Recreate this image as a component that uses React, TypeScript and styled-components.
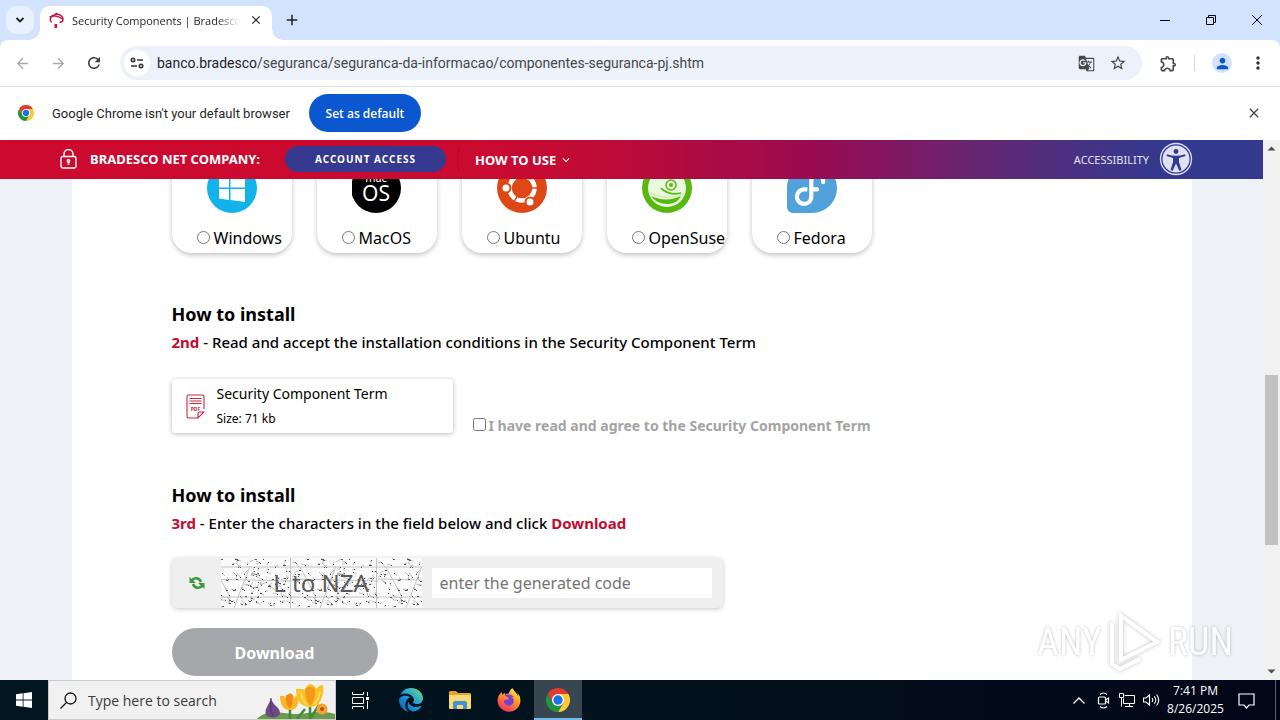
import React from "react";
import styled, { createGlobalStyle, css } from "styled-components";
import {
  MdArrowBack, MdArrowForward, MdRefresh, MdGTranslate, MdStarBorder, MdOutlineExtension,
  MdPerson, MdMoreVert, MdClose, MdAdd, MdExpandMore,
} from "react-icons/md";
import { FaEdge, FaFirefoxBrowser } from "react-icons/fa6";
import { SiFedora } from "react-icons/si";

const ui = `"Open Sans", "Noto Sans", sans-serif`;
const brand = `"Noto Sans", "Open Sans", sans-serif`;
const red = "#c4092f";

const GlobalStyle = createGlobalStyle`
  * { box-sizing: border-box; }
  body { margin: 0; font-family: ${ui}; color: #1f1f1f; overflow: hidden; }
  button, input { font: inherit; }
  button { border: 0; padding: 0; background: none; color: inherit; }
  svg { display: block; flex: none; }
  h2, p { margin: 0; }
  a { color: inherit; text-decoration: none; }
`;

const Desktop = styled.div`
  height: 100vh;
  display: flex;
  flex-direction: column;
`;

/* Browser frame */
const TabStrip = styled.header`
  flex: none;
  height: 40px;
  padding-left: 6px;
  display: flex;
  align-items: flex-end;
  background: #d3e3fd;
`;
const TabSearch = styled.button`
  width: 28px;
  height: 28px;
  margin-bottom: 6px;
  border-radius: 10px;
  background: #eaf1fe;
  display: grid;
  place-items: center;
`;
const flare = css`
  content: "";
  position: absolute;
  bottom: 0;
  width: 10px;
  height: 10px;
`;
const Tab = styled.div`
  position: relative;
  width: 232px;
  height: 34px;
  margin-left: 6px;
  padding: 0 8px 6px 8px;
  border-radius: 10px 10px 0 0;
  background: #fff;
  display: flex;
  align-items: center;
  gap: 7px;
  font-size: 11px;
  &::before { ${flare} left: -10px; background: radial-gradient(circle at 0 0, transparent 9px, #fff 10px); }
  &::after { ${flare} right: -10px; background: radial-gradient(circle at 100% 0, transparent 9px, #fff 10px); }
`;
const TabTitle = styled.span`
  flex: 1;
  overflow: hidden;
  white-space: nowrap;
  mask-image: linear-gradient(90deg, #000 145px, transparent 168px);
`;
const PlainButton = styled.button<{ $w: number; $c?: string }>`
  width: ${(p) => p.$w}px;
  height: 28px;
  color: ${(p) => p.$c || "#1f1f1f"};
  display: grid;
  place-items: center;
  flex: none;
`;
const NewTab = styled(PlainButton)`
  margin: 0 0 6px 6px;
`;
const WindowControls = styled.div`
  margin-left: auto;
  height: 40px;
  display: flex;
  align-items: center;
`;
const ToolbarBack = styled.div`
  flex: none;
  background: #d3e3fd;
`;
const Toolbar = styled.nav`
  height: 47px;
  padding: 0 4px;
  border-radius: 8px 8px 0 0;
  border-bottom: 1px solid #dfe3ea;
  background: #fff;
  display: flex;
  align-items: center;
`;
const AddressBar = styled.div`
  flex: 1;
  height: 34px;
  margin: 0 8px;
  padding: 0 8px 0 4px;
  border-radius: 17px;
  background: #edf1fa;
  display: flex;
  align-items: center;
`;
const SiteInfo = styled(PlainButton)`
  height: 26px;
  border-radius: 13px;
  background: #fff;
`;
const Url = styled.span`
  flex: 1;
  padding-left: 7px;
  font-family: Roboto, "Open Sans", sans-serif;
  font-size: 14px;
  color: #474747;
  white-space: nowrap;
  b { font-weight: 400; color: #1f1f1f; }
`;
const Divider = styled.span`
  width: 1px;
  height: 16px;
  margin: 0 9px 0 8px;
  background: #c7d6ef;
`;
const Avatar = styled.span`
  width: 20px;
  height: 20px;
  border-radius: 50%;
  background: #d3e3fd;
  color: #0b57d0;
  display: grid;
  place-items: center;
`;
const InfoBar = styled.div`
  flex: none;
  height: 53px;
  padding: 0 8px 1px 18px;
  background: #fff;
  display: flex;
  align-items: center;
  font-size: 12px;
`;
const InfoText = styled.span`
  margin: 0 19px 0 18px;
  font-family: Roboto, "Open Sans", sans-serif;
  font-size: 13px;
`;
const DefaultButton = styled.button`
  width: 112px;
  height: 38px;
  border-radius: 19px;
  background: #0b57d0;
  color: #fff;
  font-size: 12px;
  font-weight: 600;
`;
const DismissButton = styled(PlainButton)`
  margin-left: auto;
`;

/* Web page */
const Viewport = styled.div`
  flex: 1;
  min-height: 0;
  display: flex;
`;
const Page = styled.div`
  position: relative;
  flex: 1;
  overflow: hidden;
  background: #eef1f6;
  font-family: ${brand};
  color: #000;
`;
const SiteHeader = styled.header`
  position: relative;
  z-index: 1;
  height: 39px;
  padding: 0 70px 1px 60px;
  background: linear-gradient(90deg, #cc092f 0%, #cb0a30 38%, #be0b37 48%, #9b0b50 64%, #7f1862 71%, #5f2876 79%, #3f3588 88%, #33398e 92%);
  color: #fff;
  display: flex;
  align-items: center;
  font-size: 13px;
  font-weight: 700;
`;
const Product = styled.span`
  margin: 0 25px 0 13px;
`;
const AccessButton = styled.button`
  width: 161px;
  height: 26px;
  border-radius: 13px;
  background: #35398f;
  font-size: 10px;
  font-weight: 700;
  letter-spacing: 1px;
  margin-right: 12px;
`;
const HowToUse = styled.button`
  height: 24px;
  padding: 1px 0 0 16px;
  border-left: 1px solid #b5082c;
  display: flex;
  align-items: center;
  gap: 3px;
  font-weight: 700;
`;
const Accessibility = styled.a`
  margin-left: auto;
  display: flex;
  align-items: center;
  gap: 10px;
  font-size: 11px;
  font-weight: 400;
  color: #e3e3f3;
`;
const Content = styled.main`
  max-width: 1120px;
  height: 100%;
  margin: 0 auto;
  padding: 0 100px;
  background: #fff;
`;
const Systems = styled.div`
  display: flex;
  gap: 25px;
  margin-top: -26px;
`;
const SystemCard = styled.label`
  width: 120px;
  height: 100px;
  padding: 10px 0 5px 22px;
  border-radius: 20px;
  box-shadow: 0 2px 5px rgba(0, 0, 0, 0.24);
  display: flex;
  flex-direction: column;
  justify-content: space-between;
  font-size: 16px;
  line-height: 20px;
  & > svg { margin-left: 13px; }
`;
const Choice = styled.span`
  display: flex;
  align-items: center;
  input { width: 13px; height: 13px; margin: 0 4px 2px 3px; }
`;
const Step = styled.section<{ $top: number }>`
  margin-top: ${(p) => p.$top}px;
`;
const Title = styled.h2`
  font-size: 18px;
  line-height: 29px;
  font-weight: 700;
`;
const Instruction = styled.p`
  font-size: 15px;
  line-height: 26px;
  font-weight: 500;
  strong { color: ${red}; font-weight: 700; }
`;
const TermRow = styled.div`
  margin-top: 24px;
  display: flex;
  align-items: flex-end;
  gap: 20px;
`;
const TermCard = styled.a`
  width: 281px;
  height: 54px;
  padding: 0 14px;
  border-radius: 4px;
  box-shadow: 0 1px 5px rgba(0, 0, 0, 0.28);
  display: flex;
  align-items: center;
  gap: 12px;
  font-size: 14px;
  line-height: 25px;
  small { display: block; font-size: 12px; }
`;
const Agree = styled.label`
  display: flex;
  align-items: center;
  font-size: 14px;
  line-height: 14px;
  font-weight: 700;
  color: #a3a3a3;
  input { width: 13px; height: 13px; margin: 0 3px 2px 0; }
`;
const Captcha = styled.div`
  width: 551px;
  height: 50px;
  margin-top: 22px;
  padding-left: 17px;
  border-radius: 6px;
  background: #efefef;
  box-shadow: 0 1px 5px rgba(0, 0, 0, 0.22);
  display: flex;
  align-items: center;
`;
const CodeImage = styled.svg`
  margin: 0 10px 0 16px;
`;
const CodeInput = styled.input`
  width: 280px;
  height: 30px;
  padding: 0 8px;
  border: 0;
  background: #fff;
  font-size: 16px;
  &::placeholder { color: #757575; opacity: 1; }
`;
const Download = styled.button`
  width: 206px;
  height: 48px;
  margin-top: 20px;
  padding-top: 1px;
  border-radius: 24px;
  background: #a6a7aa;
  color: #fff;
  font-size: 16px;
  font-weight: 700;
`;
const ScrollBar = styled.div`
  width: 17px;
  background: #f1f1f1;
  display: flex;
  flex-direction: column;
  align-items: center;
`;
const ScrollArrow = styled.svg`
  width: 17px;
  height: 17px;
`;
const ScrollGap = styled.div<{ $grow: number }>`
  flex: ${(p) => p.$grow};
`;
const ScrollThumb = styled.div`
  flex: 170;
  width: 13px;
  background: #c1c1c1;
`;
const Watermark = styled.div`
  position: absolute;
  right: 30px;
  bottom: 8px;
  display: flex;
  align-items: center;
  gap: 5px;
  font: 400 38px/60px "Roboto Condensed", "Liberation Sans Narrow", Roboto, sans-serif;
  color: #fff;
  text-shadow: 0 0 3px rgba(0, 0, 0, 0.35);
  opacity: 0.8;
  pointer-events: none;
  svg { filter: drop-shadow(0 0 2px rgba(0, 0, 0, 0.3)); }
`;

/* Taskbar */
const TaskBar = styled.footer`
  flex: none;
  height: 40px;
  background: linear-gradient(90deg, #02161f, #03121d 50%, #020617);
  color: #fff;
  display: flex;
`;
const TaskButton = styled.button<{ $w?: number; $active?: boolean }>`
  width: ${(p) => p.$w || 49}px;
  display: grid;
  place-items: center;
  background: ${(p) => (p.$active ? "#38474f" : "none")};
  box-shadow: ${(p) => (p.$active ? "inset 0 -2px #76b9ed" : "none")};
`;
const Search = styled.label`
  width: 288px;
  padding-left: 11px;
  border: 1px solid #c9cbcc;
  background: #f1f1f1;
  color: #222;
  display: flex;
  align-items: center;
  gap: 11px;
  overflow: hidden;
`;
const SearchInput = styled.input`
  flex: 1;
  min-width: 0;
  border: 0;
  padding: 0;
  background: none;
  font-size: 14px;
  &::placeholder { color: #3a3a3a; opacity: 1; }
`;
const Tray = styled.div`
  margin-left: auto;
  display: flex;
  align-items: center;
`;
const Clock = styled.time`
  width: 65px;
  text-align: center;
  font-size: 12px;
  line-height: 18px;
  white-space: nowrap;
`;
const ShowDesktop = styled.button`
  width: 5px;
  height: 40px;
  margin-left: 11px;
  border-left: 1px solid #5b6270;
`;

const Gradients = () => (
  <svg width="0" height="0" aria-hidden="true">
    <linearGradient id="edge" x1="0" y1="1" x2="1" y2="0">
      <stop offset="0" stopColor="#0c59a4" /><stop offset=".5" stopColor="#1b9de2" /><stop offset="1" stopColor="#6fe36b" />
    </linearGradient>
    <linearGradient id="fox" x1=".8" y1="0" x2=".2" y2="1">
      <stop offset="0" stopColor="#fff44f" /><stop offset=".4" stopColor="#ff9a1f" /><stop offset="1" stopColor="#f0286b" />
    </linearGradient>
  </svg>
);

const ChromeLogo = ({ size }: { size: number }) => (
  <svg width={size} height={size} viewBox="0 0 48 48">
    <path d="M24 12h20.800A24 24 0 0 0 3.200 12l10.400 18Z" fill="#e33b2e" />
    <path d="M34.400 30 24 48A24 24 0 0 0 44.800 12H24Z" fill="#fcc934" />
    <path d="M13.600 30 3.200 12A24 24 0 0 0 24 48l10.400-18Z" fill="#229342" />
    <circle cx="24" cy="24" r="12" fill="#fff" />
    <circle cx="24" cy="24" r="9.400" fill="#1a73e8" />
  </svg>
);

const BradescoLogo = () => (
  <svg width="17" height="17" viewBox="0 0 17 17" fill="none" stroke="#cc1240">
    <path d="M3.500 10.500C1 8 2 4 7 2.600c4.500-1 8 1.400 8 4.900 0 1.800-1.500 2.700-3.500 3" strokeWidth="1.500" />
    <path d="M1.500 4.800C5 3.300 10.500 4 14.500 7M6 4.500c.3-1.700 1.500-3 3.500-3.500" strokeWidth="1.200" />
    <path d="M7.800 12v4" strokeWidth="2.600" />
  </svg>
);

const WindowsDisc = () => (
  <svg width="50" height="50" viewBox="0 0 50 50">
    <circle cx="25" cy="25" r="25" fill="#12b3eb" />
    <path d="M12 14.500 22 13v11.500H12ZM23.500 12.800 38 10.500v14H23.500ZM12 26h10v11l-10-1.500ZM23.500 26H38v13l-14.500-2Z" fill="#fff" />
  </svg>
);

const MacDisc = () => (
  <svg width="50" height="50" viewBox="0 0 50 50" fontFamily={brand} fill="#fff" textAnchor="middle">
    <circle cx="24" cy="25" r="25" fill="#000" />
    <text x="24" y="19" fontSize="11">mac</text>
    <text x="24" y="38" fontSize="21">OS</text>
  </svg>
);

const UbuntuDisc = () => (
  <svg width="50" height="50" viewBox="0 0 50 50">
    <circle cx="25" cy="25" r="25" fill="#dd4814" />
    <circle cx="25" cy="25" r="12.500" fill="none" stroke="#fff" strokeWidth="4.500" />
    <g stroke="#dd4814" strokeWidth="1.500">
      <path d="M25 25h18M25 25 16 9.400M25 25l-9 15.600" />
      <circle cx="25" cy="25" r="9.500" fill="#dd4814" stroke="none" />
      <g fill="#fff" strokeWidth="2">
        <circle cx="9" cy="25" r="4.500" /><circle cx="33" cy="11.100" r="4.500" /><circle cx="33" cy="38.900" r="4.500" />
      </g>
    </g>
  </svg>
);

const SuseDisc = () => (
  <svg width="50" height="50" viewBox="0 0 50 50">
    <circle cx="25" cy="25" r="25" fill="#57b90e" />
    <circle cx="25" cy="25" r="19" fill="#eaf8df" />
    <path d="M9 33c9 4 20 5 30 0-3 6-8 8-14 8s-13-3-16-8Z" fill="#57b90e" />
    <path d="M7 29c10 6 22 7 34 2" fill="none" stroke="#cdeeb2" strokeWidth="1.500" />
    <circle cx="29" cy="22" r="5" fill="none" stroke="#57b90e" strokeWidth="1.500" />
    <circle cx="29" cy="22" r="2" fill="#57b90e" />
    <path d="M19 25c4 5 12 7 20 5" fill="none" stroke="#57b90e" strokeWidth="1.800" />
  </svg>
);

const PdfIcon = () => (
  <svg width="19" height="25" viewBox="0 0 19 25" fill="none" stroke="#c8283f" strokeWidth="1.100">
    <path d="M18 15V2.500Q18 1 16.500 1h-14Q1 1 1 2.500v20Q1 24 2.500 24H12l6-6h-4.500q-1.500 0-1.500 1.500V24" />
    <path d="M3.500 4.500h12M3.500 7h12M3.500 9.500h12" />
    <text x="9.500" y="16.500" fontSize="5" fontWeight="700" textAnchor="middle" fill="#c8283f" stroke="none">PDF</text>
  </svg>
);

const AccessIcon = () => (
  <svg width="34" height="34" viewBox="0 0 34 34">
    <circle cx="17" cy="17" r="15.500" fill="#33398e" stroke="#dfe0f2" strokeWidth="1.300" />
    <circle cx="17" cy="17" r="13.500" fill="#dfe0f2" />
    <circle cx="17" cy="9.500" r="2.400" fill="#33398e" />
    <path d="M8 12.200q9 3 18 0l.5 1.800-6.500 2v4l2.500 8-2.200.8L17 21.500l-3.300 7.300-2.200-.8 2.500-8v-4L7.500 14Z" fill="#33398e" />
  </svg>
);

const specks = Array.from({ length: 130 }, (_, i) => {
  const r = (n: number) => {
    const v = Math.sin(i * 12.9898 + n * 78.233) * 43758.5453;
    return v - Math.floor(v);
  };
  return {
    x: Math.round(r(1) * 84),
    y: Math.round(r(2) * 48),
    dx: Math.round(r(3) * 10 - 5),
    dy: Math.round(r(4) * 8 - 4),
    w: i % 4 === 0 ? 2 : 1,
  };
});

const CaptchaPicture = () => (
  <CodeImage width="201" height="50" viewBox="0 0 201 50" role="img" aria-label="L to NZA">
    <defs>
      <pattern id="noise" x="-15" width="86" height="50" patternUnits="userSpaceOnUse">
        <path d="M0 9h86M0 21l86 2M0 39h86M84.500 0v50M28 50 44 8M8 9l16 30" stroke="#c4c4c4" fill="none" />
        {specks.map((s, i) => (
          <g key={i}>
            <path d={`M${s.x} ${s.y}l${s.dx} ${s.dy}`} stroke="#999" strokeWidth="0.600" />
            <rect x={s.x} y={s.y} width={s.w} height="1" fill="#555" />
          </g>
        ))}
      </pattern>
    </defs>
    <rect width="201" height="50" fill="#fafafa" />
    <rect width="201" height="50" fill="url(#noise)" />
    <text x="100" y="34" fontSize="24" fontFamily={brand} textAnchor="middle" fill="#5a5a5a">L to NZA</text>
  </CodeImage>
);

const RefreshCode = () => (
  <svg width="16" height="14" viewBox="0 0 16 14" fill="none" stroke="#3d9a3a" strokeWidth="2.600">
    <path d="M2.500 4.500C5 1 10.500 1.500 12 6" />
    <path d="M13.500 9.500C11 13 5.500 12.500 4 8" />
    <path d="M.5 1v6h6.500ZM15.500 13V7H9Z" fill="#3d9a3a" stroke="none" />
  </svg>
);

const Flowers = () => (
  <svg width="78" height="38" viewBox="0 0 78 38">
    <path d="M0 38C10 28 24 32 36 33s26-5 42 0v5Z" fill="#6a9a4a" />
    <path d="M33 38V24M53 38V20M53 38 62 24M40 38 48 28" stroke="#3f8a3c" strokeWidth="2.500" fill="none" />
    <path d="M9 34c-2-7 3-9 5-17 2 8 9 9 9 15 0 5-12 6-14 2Z" fill="#6d4a86" />
    <path d="M14 17c-1 8-1 12 2 18" stroke="#4b3163" fill="none" />
    <path d="M23 15q4-1 6 2 1-4 4-5 4 2 4 5 2-3 5-3c0 9-2 15-9 15s-10-6-10-14Z" fill="#f9b822" />
    <path d="M29 14c-1 6 1 11 4 14 2-4 4-9 2-15Z" fill="#f08a1c" />
    <path d="M39 8q6-1 9 1 1-5 5-6 5 1 6 5 3-4 7-4c1 12-3 22-13 22S39 18 39 8Z" fill="#fbc223" />
    <path d="M48 8c0 8 2 13 5 17 4-4 6-10 5-17-2-3-7-3-10 0Z" fill="#f39a1b" />
    <path d="M44 12q1 8 6 12M63 11q-1 8-6 12" stroke="#fde06a" strokeWidth="1.500" fill="none" />
    <circle cx="65" cy="28" r="5.500" fill="#f6a032" /><circle cx="65" cy="28" r="2" fill="#a8501c" />
  </svg>
);

const FolderIcon = () => (
  <svg width="22" height="18" viewBox="0 0 22 18">
    <path d="M0 1.500Q0 0 1.500 0H7l2 2h12q1 0 1 1v3H0Z" fill="#e8a428" />
    <path d="M0 4h22v13q0 1-1 1H1q-1 0-1-1Z" fill="#fbd976" />
    <path d="M4 18v-6q0-2 2-2h10q2 0 2 2v6h-4v-4H8v4Z" fill="#3f94d1" />
  </svg>
);

const FirefoxIcon = () => (
  <svg width="24" height="24" viewBox="0 0 24 24">
    <circle cx="12" cy="13" r="8" fill="#7a3fd0" />
    <FaFirefoxBrowser size={24} fill="url(#fox)" />
  </svg>
);

const systems = [
  { name: "Windows", logo: <WindowsDisc /> },
  { name: "MacOS", logo: <MacDisc /> },
  { name: "Ubuntu", logo: <UbuntuDisc /> },
  { name: "OpenSuse", logo: <SuseDisc /> },
  { name: "Fedora", logo: <SiFedora size={50} color="#51a2da" /> },
];

export default function App() {
  return (
    <Desktop>
      <GlobalStyle />
      <Gradients />
      <TabStrip>
        <TabSearch aria-label="Search tabs">
          <svg width="10" height="6" viewBox="0 0 10 6" fill="none" stroke="#1f1f1f" strokeWidth="1.800"><path d="m1.500 1 3.500 3.500L8.500 1" /></svg>
        </TabSearch>
        <Tab>
          <BradescoLogo />
          <TabTitle>Security Components | Bradesco</TabTitle>
          <PlainButton $w={16} aria-label="Close tab"><MdClose size={14} /></PlainButton>
        </Tab>
        <NewTab $w={28} aria-label="New tab"><MdAdd size={18} /></NewTab>
        <WindowControls>
          <PlainButton $w={46} aria-label="Minimize">
            <svg width="10" height="12" stroke="#000"><path d="M0 6.500h10" /></svg>
          </PlainButton>
          <PlainButton $w={46} aria-label="Restore">
            <svg width="10" height="10" stroke="#000" fill="none"><path d="M.5 2.500h7v7h-7zM2.500 2.500v-2h7v7h-2" /></svg>
          </PlainButton>
          <PlainButton $w={46} aria-label="Close">
            <svg width="10" height="10" stroke="#000"><path d="m0 0 10 10M10 0 0 10" /></svg>
          </PlainButton>
        </WindowControls>
      </TabStrip>
      <ToolbarBack>
        <Toolbar>
          <PlainButton $w={36} $c="#a9abae" aria-label="Back"><MdArrowBack size={17} /></PlainButton>
          <PlainButton $w={36} $c="#a9abae" aria-label="Forward"><MdArrowForward size={17} /></PlainButton>
          <PlainButton $w={36} $c="#3c3c3c" aria-label="Reload"><MdRefresh size={18} /></PlainButton>
          <AddressBar>
            <SiteInfo $w={26} aria-label="Site information">
              <svg width="14" height="12" viewBox="0 0 14 12" fill="none" stroke="#333" strokeWidth="1.600">
                <circle cx="3" cy="3" r="1.700" /><path d="M7 3h6M1 9h6" /><circle cx="11" cy="9" r="1.700" />
              </svg>
            </SiteInfo>
            <Url><b>banco.bradesco</b>/seguranca/seguranca-da-informacao/componentes-seguranca-pj.shtm</Url>
            <PlainButton $w={32} $c="#474747" aria-label="Translate this page"><MdGTranslate size={17} /></PlainButton>
            <PlainButton $w={32} $c="#474747" aria-label="Bookmark this tab"><MdStarBorder size={18} /></PlainButton>
          </AddressBar>
          <PlainButton $w={36} $c="#474747" aria-label="Extensions"><MdOutlineExtension size={19} /></PlainButton>
          <Divider />
          <PlainButton $w={36} aria-label="Profile"><Avatar><MdPerson size={17} /></Avatar></PlainButton>
          <PlainButton $w={36} $c="#333" aria-label="Menu"><MdMoreVert size={20} /></PlainButton>
        </Toolbar>
      </ToolbarBack>
      <InfoBar>
        <ChromeLogo size={16} />
        <InfoText>Google Chrome isn't your default browser</InfoText>
        <DefaultButton>Set as default</DefaultButton>
        <DismissButton $w={36} $c="#474747" aria-label="Dismiss"><MdClose size={16} /></DismissButton>
      </InfoBar>

      <Viewport>
        <Page>
          <SiteHeader>
            <svg width="17" height="20" viewBox="0 0 17 20" fill="none" stroke="#fff" strokeWidth="1.400">
              <rect x="1" y="7.500" width="15" height="11.500" rx="2" />
              <path d="M4 7.500V5a4.500 4.500 0 0 1 9 0v2.500M8.500 13v3" />
              <circle cx="8.500" cy="12" r="1.200" />
            </svg>
            <Product>BRADESCO NET COMPANY:</Product>
            <AccessButton>ACCOUNT ACCESS</AccessButton>
            <HowToUse>HOW TO USE <MdExpandMore size={14} /></HowToUse>
            <Accessibility href="#accessibility">ACCESSIBILITY <AccessIcon /></Accessibility>
          </SiteHeader>
          <Content>
            <Systems>
              {systems.map((s) => (
                <SystemCard key={s.name}>
                  {s.logo}
                  <Choice><input type="radio" name="system" />{s.name}</Choice>
                </SystemCard>
              ))}
            </Systems>
            <Step $top={47}>
              <Title>How to install</Title>
              <Instruction><strong>2nd</strong> - Read and accept the installation conditions in the Security Component Term</Instruction>
              <TermRow>
                <TermCard href="#term">
                  <PdfIcon />
                  <span>Security Component Term<small>Size: 71 kb</small></span>
                </TermCard>
                <Agree><input type="checkbox" />I have read and agree to the Security Component Term</Agree>
              </TermRow>
            </Step>
            <Step $top={48}>
              <Title>How to install</Title>
              <Instruction><strong>3rd</strong> - Enter the characters in the field below and click <strong>Download</strong></Instruction>
              <Captcha>
                <PlainButton $w={16} aria-label="New code"><RefreshCode /></PlainButton>
                <CaptchaPicture />
                <CodeInput aria-label="Generated code" placeholder="enter the generated code" />
              </Captcha>
              <Download>Download</Download>
            </Step>
          </Content>
          <Watermark>
            ANY
            <svg width="56" height="60" viewBox="0 0 56 60" fill="none" stroke="#fff" strokeWidth="4">
              <path d="M14 4v44L50 30Z" /><path d="M5 10v42l8 5 20-10" />
            </svg>
            RUN
          </Watermark>
        </Page>
        <ScrollBar>
          <ScrollArrow viewBox="0 0 17 17" fill="#505050"><path d="m4.500 10.500 4-4 4 4Z" /></ScrollArrow>
          <ScrollGap $grow={218} />
          <ScrollThumb />
          <ScrollGap $grow={118} />
          <ScrollArrow viewBox="0 0 17 17" fill="#505050"><path d="m4.500 6.500 4 4 4-4Z" /></ScrollArrow>
        </ScrollBar>
      </Viewport>

      <TaskBar>
        <TaskButton $w={48} aria-label="Start">
          <svg width="16" height="16" viewBox="0 0 16 16" fill="#fff">
            <path d="M0 2.200 6.700 1.300v6.300H0ZM7.500 1.200 16 0v7.600H7.500ZM0 8.400h6.700v6.300L0 13.800ZM7.500 8.400H16V16l-8.500-1.200Z" />
          </svg>
        </TaskButton>
        <Search>
          <svg width="17" height="17" viewBox="0 0 17 17" fill="none" stroke="#111" strokeWidth="1.300">
            <circle cx="10.500" cy="6.500" r="5.500" /><path d="m6.500 10.500-6 6" />
          </svg>
          <SearchInput aria-label="Search" placeholder="Type here to search" />
          <Flowers />
        </Search>
        <TaskButton $w={48} aria-label="Task view">
          <svg width="17" height="17" viewBox="0 0 17 17" fill="none" stroke="#fff">
            <path d="M.5 0v2.500h11V0M.5 17v-2.500h11V17M.5 5.500h11v6H.5zM15.500 0v4M15.500 9v8" />
            <path d="M14 5h3v3h-3z" fill="#fff" stroke="none" />
          </svg>
        </TaskButton>
        <TaskButton $w={53} aria-label="Edge"><FaEdge size={24} fill="url(#edge)" /></TaskButton>
        <TaskButton $w={46} aria-label="File Explorer"><FolderIcon /></TaskButton>
        <TaskButton $w={51} aria-label="Firefox"><FirefoxIcon /></TaskButton>
        <TaskButton $w={48} $active aria-label="Chrome"><ChromeLogo size={24} /></TaskButton>
        <Tray>
          <TaskButton $w={24} aria-label="Show hidden icons">
            <svg width="12" height="7" viewBox="0 0 12 7" fill="none" stroke="#fff" strokeWidth="1.300"><path d="m.5 6.500 5.500-5.500 5.500 5.500" /></svg>
          </TaskButton>
          <TaskButton $w={24} aria-label="Meet now">
            <svg width="13" height="17" viewBox="0 0 13 17" fill="none" stroke="#fff" strokeWidth="1.200">
              <rect x="1.500" y="5" width="7" height="7" rx="1" /><path d="m8.500 8 3-2v5l-3-2M3 2.500Q6.500-.5 10 2.500M3 14.500q3.500 3 7 0" />
            </svg>
          </TaskButton>
          <TaskButton $w={24} aria-label="Network">
            <svg width="17" height="15" viewBox="0 0 17 15" fill="none" stroke="#fff"><path d="M5.500 2.500h10v8h-11v-5M6 13.500h8M10.500 10.500v3M.5.500h4v4h-4zM2.500 4.500v9" /></svg>
          </TaskButton>
          <TaskButton $w={24} aria-label="Volume">
            <svg width="17" height="14" viewBox="0 0 17 14" fill="none" stroke="#fff" strokeWidth="1.100"><path d="M.5 5v4h2.500l3.500 3V2L3 5ZM9 5q1.500 2 0 4M11.300 3.300q3 3.700 0 7.400M13.500 1.500q4.500 5.500 0 11" /></svg>
          </TaskButton>
          <Clock>7:41 PM<br />8/26/2025</Clock>
          <TaskButton $w={36} aria-label="Notifications">
            <svg width="17" height="17" viewBox="0 0 17 17" fill="none" stroke="#fff" strokeWidth="1.200"><path d="M1 2h15v11h-5l-2.500 3L6 13H1Z" /></svg>
          </TaskButton>
          <ShowDesktop aria-label="Show desktop" />
        </Tray>
      </TaskBar>
    </Desktop>
  );
}
